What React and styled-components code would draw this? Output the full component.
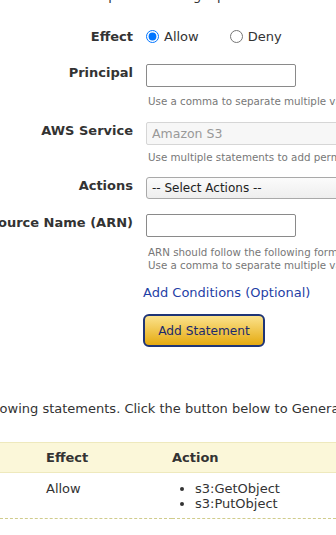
import React from 'react';
import styled, { createGlobalStyle } from 'styled-components';

const GlobalStyle = createGlobalStyle`
  html, body {
    margin: 0;
    padding: 0;
    background: #fff;
    overflow: hidden;
  }
  body {
    font-family: "DejaVu Sans", Verdana, sans-serif;
    font-size: 13px;
    color: #333;
  }
`;

const Page = styled.div`
  width: 336px;
  height: 535px;
  overflow: hidden;
`;

const CutLine = styled.div`
  height: 3px;
  overflow: hidden;
  white-space: nowrap;
  & > span {
    display: block;
    margin-top: -12px;
    margin-left: ${p => p.shift}px;
    line-height: 16px;
  }
`;

const Field = styled.div`
  display: grid;
  grid-template-columns: 133px 1fr;
  column-gap: 13px;
  align-items: center;
  margin-top: ${p => p.top}px;
`;

const Label = styled.label`
  display: flex;
  justify-content: flex-end;
  padding-bottom: ${p => (p.lift ?? 3) * 2}px;
  line-height: 15px;
  white-space: nowrap;
  font-weight: bold;
  color: #333;
`;

const Control = styled.div`
  display: flex;
  align-items: center;
  min-width: 0;
  white-space: nowrap;
  line-height: 15px;
`;

const Radio = styled.input.attrs({ type: 'radio' })`
  width: 13px;
  height: 13px;
  margin: 0 5px 0 0;
`;

const RadioText = styled.span`
  margin-right: ${p => p.gap || 0}px;
`;

const TextInput = styled.input.attrs({ type: 'text' })`
  box-sizing: border-box;
  width: ${p => p.w || 150}px;
  flex: none;
  height: 23px;
  padding: 0 5px;
  border: 1px solid ${p => (p.disabled ? '#d6d6d6' : '#8a8a8a')};
  border-radius: 2px;
  background: ${p => (p.disabled ? '#f7f7f7' : '#fff')};
  font: inherit;
  font-size: 12.5px;
  color: #999;
`;

const Select = styled.div`
  box-sizing: border-box;
  width: 300px;
  flex: none;
  height: 22px;
  padding: 0 5px;
  display: flex;
  align-items: center;
  border: 1px solid #a9a9a9;
  border-radius: 3px;
  background: linear-gradient(#fbfbfb, #eeeeee);
  font-size: 12px;
  color: #222;
`;

const Hint = styled.div`
  margin: ${p => p.top}px 0 0 148px;
  font-size: 10.3px;
  line-height: 13px;
  color: #777;
  white-space: nowrap;
`;

const Link = styled.a`
  display: block;
  margin: 13px 0 0 143px;
  line-height: 16px;
  color: #1f3fa6;
  text-decoration: none;
  white-space: nowrap;
`;

const Button = styled.button`
  display: block;
  box-sizing: border-box;
  margin: 13px 0 0 143px;
  width: 122px;
  height: 33px;
  border: 2px solid #1f3577;
  border-radius: 6px;
  background: linear-gradient(#fbe28c, #e5aa10);
  color: #1c2a6c;
  font: inherit;
  font-size: 12.2px;
  padding: 0;
`;

const Note = styled.p`
  margin: 54px 0 0 -117px;
  line-height: 16px;
  white-space: nowrap;
  color: #333;
`;

const Table = styled.div`
  margin-top: 25px;
  display: grid;
  grid-template-columns: 172px 1fr;
`;

const HeadCell = styled.div`
  height: 29px;
  display: flex;
  align-items: center;
  padding-left: ${p => p.pad || 0}px;
  background: #fbf7d9;
  border-top: 1px solid #eee9bd;
  border-bottom: 1px solid #eee9bd;
  font-weight: bold;
`;

const Cell = styled.div`
  padding: 8px 0 7px ${p => p.pad || 0}px;
  line-height: 15px;
  border-bottom: 1px dashed #d0cc8c;
`;

const Bullets = styled.ul`
  margin: 0;
  padding: 0 0 0 23px;
  li {
    line-height: 15px;
  }
`;

export default function App() {
  return (
    <Page>
      <GlobalStyle />
      <CutLine shift={-101}>
        <span>A statement is the formal description of a single permission.</span>
      </CutLine>

      <Field top={26}>
        <Label lift={0}>Effect</Label>
        <Control>
          <Radio name="effect" defaultChecked />
          <RadioText gap={31}>Allow</RadioText>
          <Radio name="effect" />
          <RadioText>Deny</RadioText>
        </Control>
      </Field>

      <Field top={20}>
        <Label>Principal</Label>
        <Control>
          <TextInput />
        </Control>
      </Field>
      <Hint top={8}>Use a comma to separate multiple values.</Hint>

      <Field top={14}>
        <Label>AWS Service</Label>
        <Control>
          <TextInput w={300} disabled defaultValue="Amazon S3" />
        </Control>
      </Field>
      <Hint top={6}>Use multiple statements to add permissions for more than one service.</Hint>

      <Field top={13}>
        <Label>Actions</Label>
        <Control>
          <Select>-- Select Actions --</Select>
        </Control>
      </Field>

      <Field top={15}>
        <Label>Amazon Resource Name (ARN)</Label>
        <Control>
          <TextInput />
        </Control>
      </Field>
      <Hint top={9}>
        ARN should follow the following format: arn:aws:s3:::&lt;bucket_name&gt;/&lt;key_name&gt;.
        <br />
        Use a comma to separate multiple values.
      </Hint>

      <Link href="#">Add Conditions (Optional)</Link>
      <Button>Add Statement</Button>

      <Note>You added the following statements. Click the button below to Generate a policy.</Note>

      <Table>
        <HeadCell pad={46}>Effect</HeadCell>
        <HeadCell>Action</HeadCell>
        <Cell pad={46}>Allow</Cell>
        <Cell>
          <Bullets>
            <li>s3:GetObject</li>
            <li>s3:PutObject</li>
          </Bullets>
        </Cell>
      </Table>
    </Page>
  );
}
